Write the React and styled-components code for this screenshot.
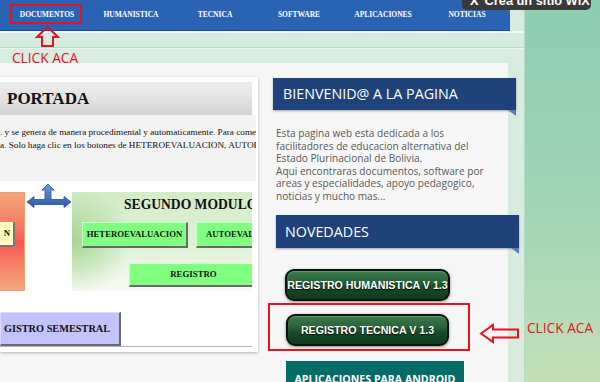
import React from "react";
import styled, { createGlobalStyle } from "styled-components";

const Global = createGlobalStyle`
  html, body { margin: 0; padding: 0; }
  body { width: 600px; height: 382px; overflow: hidden; background: #8dccb0; }
`;

const Page = styled.div`
  position: relative;
  width: 600px;
  height: 382px;
  overflow: hidden;
  display: flex;
  background: linear-gradient(to bottom, #8ccdb1 0%, #9fd3b4 50%, #c2e0b7 100%);
`;

const MainColumn = styled.div`
  width: 524px;
  height: 382px;
  flex: none;
  display: flex;
  flex-direction: column;
  background: linear-gradient(to bottom, #d6ebe0 0%, #d7ebdf 60%, #d8eadb 100%);
  border-right: 1px solid #b4dbc6;
`;

const Nav = styled.nav`
  flex: none;
  width: 505px;
  height: 30px;
  padding-left: 5px;
  display: grid;
  grid-template-columns: repeat(6, 84px);
  align-items: center;
  background: #2b63b4;
  border-bottom: 1px solid #1c4d98;
`;

const NavItem = styled.a`
  text-align: center;
  padding-bottom: 2px;
  font-family: "Liberation Serif", "Times New Roman", serif;
  font-weight: bold;
  font-size: 7.5px;
  color: #ffffff;
  text-decoration: none;
`;

const Band = styled.div`
  flex: none;
  height: ${(p) => p.h}px;
  background: ${(p) => p.bg};
`;

const Content = styled.div`
  width: 508px;
  flex: 1;
  min-height: 0;
  display: flex;
  align-items: flex-start;
  padding-top: 14px;
  background: #f6f6f6;
`;

const Card = styled.section`
  width: 252px;
  height: 270px;
  flex: none;
  padding: 5px 6px 0 0;
  background: #ffffff;
  box-shadow: 0 1px 3px rgba(0, 0, 0, 0.28);
  display: flex;
  flex-direction: column;
  overflow: hidden;
`;

const CardHeader = styled.h1`
  margin: 0;
  height: 33px;
  line-height: 34px;
  padding-left: 7px;
  background: linear-gradient(to bottom, #ececec 0%, #e2e2e2 55%, #d2d2d2 100%);
  font-family: "Liberation Serif", "Times New Roman", serif;
  font-weight: bold;
  font-size: 17px;
  color: #111;
`;

const Intro = styled.div`
  height: 66px;
  margin-right: -4px;
  padding-top: 11px;
  box-sizing: border-box;
  background: #f3f3f3;
  font-family: "Liberation Serif", "Times New Roman", serif;
  font-size: 9.2px;
  line-height: 13px;
  color: #111;
  white-space: nowrap;
  overflow: hidden;
`;

const Diagram = styled.div`
  margin-top: 11px;
  height: 99px;
  display: flex;
  align-items: flex-start;
`;

const RedBlock = styled.div`
  width: 25px;
  height: 99px;
  flex: none;
  box-sizing: border-box;
  border: 1px solid #f0a070;
  border-left: none;
  background: linear-gradient(to bottom, #f4a57c 0%, #f67a62 35%, #f85656 50%, #f67a62 70%, #f4a87e 100%);
  padding-top: 29px;
`;

const YellowBtn = styled.div`
  width: 15px;
  height: 25px;
  box-sizing: border-box;
  background: #ffffc4;
  border-right: 2px solid #777;
  border-bottom: 2px solid #777;
  font-family: "Liberation Serif", "Times New Roman", serif;
  font-weight: bold;
  font-size: 8.8px;
  line-height: 23px;
  text-align: right;
  padding-right: 3px;
  color: #111;
`;

const ArrowWrap = styled.div`
  width: 44px;
  flex: none;
  margin: -8px 1px 0 2px;
  display: flex;
`;

const GreenBlock = styled.div`
  flex: 1;
  height: 99px;
  overflow: hidden;
  background:
    radial-gradient(ellipse 60px 55px at 0% 48%, rgba(160, 210, 140, 0.9), rgba(160, 210, 140, 0) 100%),
    linear-gradient(to bottom, #d3ecc7 0%, #def0d4 50%, #f6fbf3 100%);
  display: flex;
  flex-direction: column;
`;

const GreenTitle = styled.div`
  padding: 3px 0 0 52px;
  height: 20px;
  font-family: "Liberation Serif", "Times New Roman", serif;
  font-weight: bold;
  font-size: 13.6px;
  line-height: 20px;
  color: #111;
  white-space: nowrap;
`;

const BtnRow = styled.div`
  display: flex;
  gap: 8px;
  white-space: nowrap;
  padding-left: ${(p) => p.pl}px;
  margin-top: ${(p) => p.mt}px;
`;

const SoftBtn = styled.div`
  flex: none;
  width: ${(p) => p.w}px;
  height: ${(p) => p.h}px;
  box-sizing: border-box;
  background: ${(p) => p.bg};
  border-top: 1px solid ${(p) => p.light};
  border-left: 1px solid ${(p) => p.light};
  border-right: 2px solid #6a6a6a;
  border-bottom: 2px solid #6a6a6a;
  font-family: "Liberation Serif", "Times New Roman", serif;
  font-weight: bold;
  font-size: ${(p) => p.fs}px;
  line-height: ${(p) => p.h - 3}px;
  text-align: ${(p) => p.align || "center"};
  padding-left: ${(p) => p.pl || 0}px;
  color: #111;
  white-space: nowrap;
  overflow: hidden;
`;

const BottomRow = styled.div`
  margin-top: 21px;
  height: 34px;
  border-bottom: 1px solid #b4b4b4;
  display: flex;
`;

const Side = styled.aside`
  width: 243px;
  flex: none;
  margin-left: 7px;
  display: flex;
  flex-direction: column;
`;

const Ribbon = styled.h2`
  position: relative;
  margin: ${(p) => p.mt}px ${(p) => -p.ml}px 0 ${(p) => p.ml}px;
  height: ${(p) => p.h}px;
  line-height: ${(p) => p.h}px;
  padding-left: ${(p) => p.pl}px;
  background: #1f427b;
  box-shadow: 0 1px 2px rgba(0, 0, 0, 0.35);
  font-family: "Open Sans", "Noto Sans", sans-serif;
  font-weight: normal;
  font-size: 14.3px;
  color: #ffffff;
  &::after {
    content: "";
    position: absolute;
    right: 0;
    bottom: -6px;
    width: 0;
    height: 0;
    border-top: 6px solid #5a7cb4;
    border-left: 8px solid transparent;
  }
`;

const Para = styled.p`
  margin: 17px 0 0 11px;
  font-family: "Open Sans", "Noto Sans", sans-serif;
  font-size: 10.1px;
  line-height: 12.5px;
  color: #595959;
  white-space: nowrap;
`;

const GlossBtn = styled.a`
  display: block;
  margin: ${(p) => p.mt}px 0 0 ${(p) => p.ml}px;
  width: ${(p) => p.w}px;
  height: 32px;
  box-sizing: border-box;
  border: 2px solid #0b140d;
  border-radius: 9px;
  background: linear-gradient(to bottom, #3b7a4c 0%, #2a673c 35%, #164a27 60%, #0e3a1c 100%);
  box-shadow: 0 1px 3px rgba(0, 0, 0, 0.45), inset 0 1px 1px rgba(255, 255, 255, 0.25);
  font-family: "Liberation Sans", Arial, sans-serif;
  font-weight: bold;
  font-size: 10.65px;
  line-height: 28px;
  text-align: center;
  color: #ffffff;
  text-shadow: 0 1px 1px #000;
  text-decoration: none;
  white-space: nowrap;
`;

const TealBox = styled.a`
  display: block;
  margin: 15px 0 0 21px;
  width: 178px;
  height: 34px;
  background: #046b66;
  font-family: "Open Sans", "Noto Sans", sans-serif;
  font-weight: bold;
  font-size: 10.6px;
  line-height: 34px;
  padding-top: 1px;
  text-align: center;
  color: #ffffff;
  text-decoration: none;
  white-space: nowrap;
`;

/* ---- overlays (annotations / tooltip) ---- */
const Overlay = styled.div`
  position: absolute;
  left: ${(p) => p.x}px;
  top: ${(p) => p.y}px;
  width: ${(p) => p.w}px;
  height: ${(p) => p.h}px;
  pointer-events: none;
`;

const RedFrame = styled(Overlay)`
  box-sizing: border-box;
  border: 2px solid #e3141f;
`;

const ClickText = styled.div`
  position: absolute;
  left: ${(p) => p.x}px;
  top: ${(p) => p.y}px;
  font-family: "Open Sans", "Noto Sans", sans-serif;
  font-size: 13.7px;
  line-height: 16px;
  color: #e3141f;
  white-space: nowrap;
`;

const WixTip = styled.div`
  position: absolute;
  left: 462px;
  top: -10px;
  width: 129px;
  height: 20px;
  box-sizing: border-box;
  padding: 2px 0 0 8px;
  border-radius: 0 0 5px 5px;
  background: #3a3a3a;
  display: flex;
  align-items: center;
  gap: 6px;
  font-family: "Liberation Sans", Arial, sans-serif;
  font-weight: bold;
  font-size: 12.8px;
  line-height: 16px;
  color: #ffffff;
  white-space: nowrap;
`;

const navItems = ["DOCUMENTOS", "HUMANISTICA", "TECNICA", "SOFTWARE", "APLICACIONES", "NOTICIAS"];

export default function App() {
  return (
    <>
      <Global />
      <Page>
        <MainColumn>
          <Nav>
            {navItems.map((n) => (
              <NavItem key={n}>{n}</NavItem>
            ))}
          </Nav>
          <Band h={2} bg="#eef7f2" />
          <Band h={14} bg="#d5ebe0" />
          <Band h={1} bg="#b6dac7" />
          <Band h={1} bg="#eaf5ef" />
          <Band h={14} bg="#d8ece2" />
          <Content>
            <Card>
              <CardHeader>PORTADA</CardHeader>
              <Intro>
                . y se genera de manera procedimental y automaticamente. Para comenzar
                <br />
                a. Solo haga clic en los botones de HETEROEVALUACION, AUTOEVALUACION
              </Intro>
              <Diagram>
                <RedBlock>
                  <YellowBtn>N</YellowBtn>
                </RedBlock>
                <ArrowWrap>
                  <svg width="44" height="24" viewBox="0 0 44 24">
                    <defs>
                      <linearGradient id="ba" x1="0" y1="0" x2="0" y2="1">
                        <stop offset="0" stopColor="#6d98d8" />
                        <stop offset="1" stopColor="#2d5aa6" />
                      </linearGradient>
                    </defs>
                    <path
                      d="M21 0 L27 6 L24 6 L24 15.5 L37 15.5 L37 12.5 L44 18 L37 23.5 L37 20.5 L7 20.5 L7 23.5 L0 18 L7 12.5 L7 15.5 L18 15.5 L18 6 L15 6 Z"
                      fill="url(#ba)"
                      stroke="#24509a"
                      strokeWidth="0.8"
                    />
                  </svg>
                </ArrowWrap>
                <GreenBlock>
                  <GreenTitle>SEGUNDO MODULO</GreenTitle>
                  <BtnRow pl={10} mt={7}>
                    <SoftBtn w={106} h={26} bg="#80ff80" light="#c8ffc8" fs={8.7}>
                      HETEROEVALUACION
                    </SoftBtn>
                    <SoftBtn w={100} h={26} bg="#80ff80" light="#c8ffc8" fs={8.7} align="left" pl={9}>
                      AUTOEVALUACION
                    </SoftBtn>
                  </BtnRow>
                  <BtnRow pl={57} mt={15}>
                    <SoftBtn w={130} h={24} bg="#80ff80" light="#c8ffc8" fs={8.8}>
                      REGISTRO
                    </SoftBtn>
                  </BtnRow>
                </GreenBlock>
              </Diagram>
              <BottomRow>
                <SoftBtn w={121} h={34} bg="#c3c3fb" light="#dcdcff" fs={10.3} align="left" pl={3}>
                  GISTRO SEMESTRAL
                </SoftBtn>
              </BottomRow>
            </Card>
            <Side>
              <Ribbon mt={1} ml={8} h={32} pl={10}>
                BIENVENID@ A LA PAGINA
              </Ribbon>
              <Para>
                Esta pagina web esta dedicada a los
                <br />
                facilitadores de educacion alternativa del
                <br />
                Estado Plurinacional de Bolivia.
                <br />
                Aqui encontraras documentos, software por
                <br />
                areas y especialidades, apoyo pedagogico,
                <br />
                noticias y mucho mas...
              </Para>
              <Ribbon mt={13} ml={11} h={33} pl={9}>
                NOVEDADES
              </Ribbon>
              <GlossBtn mt={21} ml={20} w={165}>
                REGISTRO HUMANISTICA V 1.3
              </GlossBtn>
              <GlossBtn mt={13} ml={21} w={163}>
                REGISTRO TECNICA V 1.3
              </GlossBtn>
              <TealBox>APLICACIONES PARA ANDROID</TealBox>
            </Side>
          </Content>
        </MainColumn>

        {/* annotations */}
        <RedFrame x={10} y={4} w={72} h={20} />
        <Overlay x={35} y={26} w={25} h={22}>
          <svg width="25" height="22" viewBox="0 0 25 22">
            <path
              d="M12.5 1 L23 11 L18 11 L18 20 L7 20 L7 11 L2 11 Z"
              fill="none"
              stroke="#e3141f"
              strokeWidth="2"
              strokeLinejoin="miter"
            />
          </svg>
        </Overlay>
        <ClickText x={12} y={50}>CLICK ACA</ClickText>

        <RedFrame x={268} y={303} w={202} h={48} />
        <Overlay x={479} y={323} w={42} h={21}>
          <svg width="42" height="21" viewBox="0 0 42 21">
            <path
              d="M2 10.5 L14 2 L14 6.5 L39 6.5 L39 14.5 L14 14.5 L14 19 Z"
              fill="none"
              stroke="#e3141f"
              strokeWidth="2"
            />
          </svg>
        </Overlay>
        <ClickText x={527} y={320}>CLICK ACA</ClickText>

        <WixTip>
          <span>X</span>
          <span>Crea un sitio WIX</span>
        </WixTip>
      </Page>
    </>
  );
}
